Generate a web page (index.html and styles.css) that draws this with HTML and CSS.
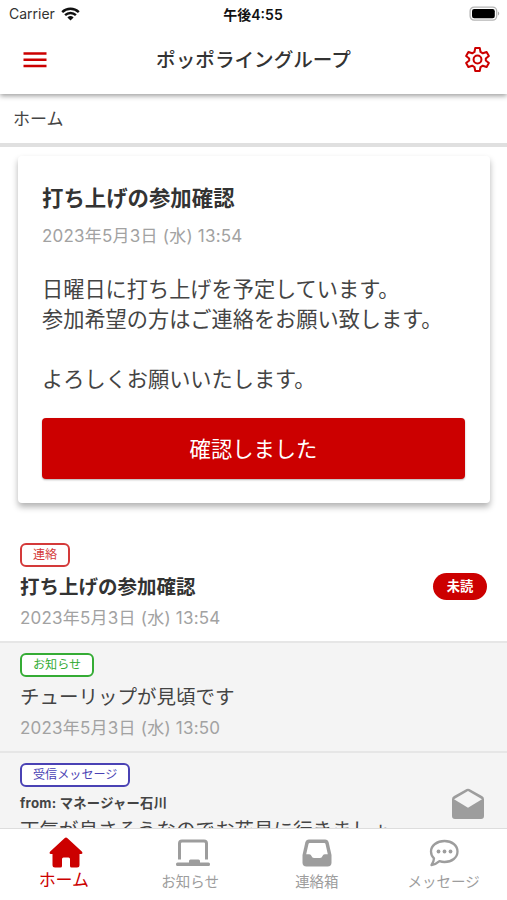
FILE: index.html
```html
<!DOCTYPE html>
<html lang="ja">
<head>
  <meta charset="UTF-8" />
  <meta name="viewport" content="width=device-width, initial-scale=1.0" />
  <title>ポッポライングループ</title>
  <link rel="stylesheet" href="styles.css">
</head>
<body>
  <header class="header">
    <div class="status-bar">
      <div class="carrier">
        <span>Carrier</span>
        <svg width="19" height="14" viewBox="0 0 19 14">
          <path d="M1.2 5.2a11.8 11.8 0 0 1 16.6 0M4.1 8.2a7.7 7.7 0 0 1 10.8 0" fill="none" stroke="#111" stroke-width="2.4"/>
          <path d="M6.4 10.5a4.5 4.5 0 0 1 6.2 0L9.5 13.6z" fill="#111"/>
        </svg>
      </div>
      <div class="clock">午後4:55</div>
      <div class="battery">
        <svg width="32" height="16" viewBox="0 0 32 16">
          <rect x="1.1" y="1.1" width="26.6" height="13" rx="4" fill="#fff" stroke="#b5b5b5" stroke-width="1.3"/>
          <rect x="3" y="3" width="22.8" height="9.3" rx="2.2" fill="#000"/>
          <path d="M29 5.6a2.3 2.3 0 0 1 0 4z" fill="#aaa"/>
        </svg>
      </div>
    </div>
    <div class="title-bar">
      <svg class="menu-icon" width="24" height="18" viewBox="0 0 24 18">
        <path d="M.5 2.5h23M.5 8.8h23M.5 15h23" stroke="#c00" stroke-width="2.4"/>
      </svg>
      <h1>ポッポライングループ</h1>
      <svg class="gear-icon" width="27" height="27" viewBox="0 0 24 24" fill="none" stroke="#c00" stroke-width="1.8" stroke-linejoin="round">
        <path d="M10 1.800h4l.7 3.500 2 1.200 3.400-1.200 2 3.500-2.700 2.300v1.800l2.700 2.300-2 3.500-3.400-1.200-2 1.200-.7 3.500h-4l-.7-3.500-2-1.200-3.400 1.200-2-3.500 2.700-2.300v-1.800L1.900 8.800l2-3.500 3.400 1.200 2-1.200z"/>
        <circle cx="12" cy="12" r="3.500"/>
      </svg>
    </div>
  </header>

  <div class="breadcrumb">ホーム</div>

  <main class="content">
    <section class="card">
      <h2>打ち上げの参加確認</h2>
      <div class="date">2023年5月3日 (水) 13:54</div>
      <p>日曜日に打ち上げを予定しています。<br>参加希望の方はご連絡をお願い致します。<br><br>よろしくお願いいたします。</p>
      <button class="confirm">確認しました</button>
    </section>

    <div class="list">
      <div class="item unread">
        <div class="item-body">
          <span class="tag red">連絡</span>
          <div class="item-title">打ち上げの参加確認</div>
          <div class="date">2023年5月3日 (水) 13:54</div>
        </div>
        <span class="pill">未読</span>
      </div>
      <div class="item">
        <div class="item-body">
          <span class="tag green">お知らせ</span>
          <div class="item-title">チューリップが見頃です</div>
          <div class="date">2023年5月3日 (水) 13:50</div>
        </div>
      </div>
      <div class="item">
        <div class="item-body">
          <span class="tag blue">受信メッセージ</span>
          <div class="from">from: マネージャー石川</div>
          <div class="item-title">天気が良さそうなのでお花見に行きましょ</div>
        </div>
        <svg class="mail-icon" width="34" height="32" viewBox="0 0 34 32">
          <path d="M3 8 15.600 1.100q1.400-.8 2.800 0L31 8q2 1.100 2 3.200V28q0 3-3 3H4q-3 0-3-3V11.200Q1 9.100 3 8z" fill="#9d9d9d"/>
          <path d="M17 3 31 11.300 17 19.800 3 11.300z" fill="#f4f4f4"/>
        </svg>
      </div>
    </div>
  </main>

  <nav class="tabs">
    <a class="tab active">
      <svg width="34" height="31" viewBox="0 0 34 31">
        <path d="M15.500 1.200q1.500-1.400 3 0L32.800 14.600q1.600 2-.8 2.400H30.500V28q0 2.500-2.500 2.500H22.500q-1.500 0-1.500-1.500V22q0-1.500-1.500-1.500h-5Q13 20.500 13 22v7q0 1.500-1.500 1.500H6Q3.500 30.500 3.500 28V17H2q-2.400-.4-.8-2.400z" fill="#c00"/>
      </svg>
      <span>ホーム</span>
    </a>
    <a class="tab notice">
      <svg width="34" height="28" viewBox="0 0 34 28">
        <path d="M3.500 20.500V4.500q0-2.500 2.500-2.500h22q2.500 0 2.500 2.500V20.500" fill="none" stroke="#9d9d9d" stroke-width="3"/>
        <path d="M1.500 23.500H13V22q0-1.500 1.500-1.500h8Q24 20.500 24 22v1.500h8.500Q34 23.500 34 25v.500q0 1.500-1.500 1.500h-31Q0 27 0 25.500V25q0-1.500 1.500-1.500z" fill="#9d9d9d"/>
      </svg>
      <span>お知らせ</span>
    </a>
    <a class="tab">
      <svg width="30" height="28" viewBox="0 0 30 28">
        <path d="M7 .5h16q3 0 3.700 3L29.500 16v7.500q0 4-4 4h-21q-4 0-4-4V16L3.300 3.500Q4 .5 7 .5z" fill="#9d9d9d"/>
        <path d="M7.700 4h14.600q1 0 1.200 1l2.300 10.300h-3q-1.800 0-2.300 1.700-.6 2-2.500 2h-6q-1.900 0-2.500-2-.5-1.700-2.300-1.700h-3L6.500 5q.2-1 1.200-1z" fill="#fff"/>
      </svg>
      <span>連絡箱</span>
    </a>
    <a class="tab">
      <svg width="30" height="28" viewBox="0 0 30 28">
        <path d="M15.500 2C23 2 28.500 6.500 28.500 12.500S23 23 15.500 23q-2.600 0-5-.8Q7 25.400 2.500 26q2.300-3 2.500-6.600Q2 16.500 2 12.500C2 6.500 8 2 15.500 2z" fill="none" stroke="#9d9d9d" stroke-width="2.300" stroke-linejoin="round"/>
        <g fill="#9d9d9d"><circle cx="9.500" cy="12.500" r="1.900"/><circle cx="15.500" cy="12.500" r="1.900"/><circle cx="21.500" cy="12.500" r="1.900"/></g>
      </svg>
      <span>メッセージ</span>
    </a>
  </nav>
</body>
</html>
```
FILE: styles.css
```css
* {
  box-sizing: border-box;
}
body {
  margin: 0;
  height: 900px;
  display: flex;
  flex-direction: column;
  overflow: hidden;
  background: #fff;
  color: #444;
  font-family: Inter, "Noto Sans CJK JP", sans-serif;
  white-space: nowrap;
}
h1, h2, p {
  margin: 0;
}
svg {
  display: block;
  flex: none;
}
.header {
  height: 94px;
  flex: none;
  box-shadow: 0 2px 5px rgba(0, 0, 0, 0.38);
}
.status-bar {
  display: grid;
  grid-template-columns: 1fr auto 1fr;
  align-items: center;
  height: 27px;
  padding: 0 8px 0 9px;
  font-size: 14px;
  color: #111;
}
.carrier {
  display: flex;
  align-items: center;
  gap: 6px;
  color: #333;
}
.clock {
  padding-right: 2px;
  font-size: 14px;
  font-weight: 600;
}
.battery {
  display: flex;
  justify-content: flex-end;
  margin-right: -2px;
}
.title-bar {
  display: flex;
  align-items: center;
  justify-content: space-between;
  height: 65px;
  padding: 0 16px 0 23px;
}
.title-bar h1 {
  margin: 0 2px 2px -2px;
  color: #333;
  font-size: 19.6px;
  font-weight: 500;
}
.breadcrumb {
  height: 53px;
  flex: none;
  padding-left: 13px;
  border-bottom: 4px solid #e0e0e0;
  font-size: 17px;
  line-height: 50px;
}
.content {
  flex: 1;
  min-height: 0;
  overflow: hidden;
}
.card {
  height: 347px;
  margin: 9px 17px 30px 18px;
  padding: 25px 25px 0 24px;
  border-radius: 4px;
  box-shadow: 0 4px 6px rgba(0, 0, 0, 0.3);
}
.card h2 {
  color: #333;
  font-size: 21.4px;
  line-height: 34px;
}
.date {
  color: #a2a2a2;
  font-size: 17px;
  letter-spacing: 0.22px;
  line-height: 26px;
}
.card .date {
  margin-top: 8px;
}
.card p {
  margin-top: 25px;
  font-size: 21.2px;
  line-height: 30px;
}
.confirm {
  display: block;
  width: 100%;
  height: 61px;
  margin-top: 24px;
  padding: 0 0 2px;
  border: none;
  border-radius: 4px;
  background: #c00;
  box-shadow: 0 1px 2px rgba(0, 0, 0, 0.3);
  color: #fff;
  font-family: inherit;
  font-size: 21.3px;
}
.item {
  display: flex;
  align-items: center;
  justify-content: space-between;
  height: 110px;
  padding: 0 20px;
  border-bottom: 2px solid #e6e6e6;
  background: #f4f4f4;
}
.item-body {
  height: 110px;
  padding-top: 11px;
}
.item.unread {
  background: #fff;
}
.tag {
  display: block;
  width: fit-content;
  height: 24px;
  padding: 0 11px;
  border: 2px solid;
  border-radius: 6px;
  background: #fff;
  font-size: 12.1px;
  line-height: 20px;
}
.red {
  color: #d43a3a;
}
.green {
  color: #35ac35;
}
.blue {
  color: #4a42b4;
}
.item-title {
  margin-top: 4px;
  font-size: 19.5px;
  line-height: 32px;
}
.unread .item-title {
  color: #333;
  font-weight: bold;
}
.item .date {
  margin-top: 2px;
}
.from {
  margin-top: 6px;
  font-size: 13.3px;
  font-weight: bold;
  letter-spacing: 0.25px;
  line-height: 20px;
}
.from + .item-title {
  margin-top: 1px;
}
.pill {
  width: 54px;
  height: 27px;
  border-radius: 14px;
  background: #c00;
  color: #fff;
  font-size: 13.3px;
  font-weight: bold;
  line-height: 27px;
  text-align: center;
}
.unread .pill {
  margin-bottom: 2px;
}
.mail-icon {
  margin: 0 2px 7px 0;
}
.tabs {
  display: grid;
  grid-template-columns: repeat(4, 1fr);
  height: 72px;
  flex: none;
  border-top: 1px solid #ddd;
  background: #fff;
}
.tab {
  display: flex;
  flex-direction: column;
  align-items: center;
  padding-top: 10px;
  color: #9d9d9d;
  font-size: 14.5px;
}
.tab span {
  margin-top: 3px;
  line-height: 24px;
}
.tab.active {
  padding-top: 8px;
  color: #c00;
  font-size: 17px;
}
.tab.active svg {
  margin-left: 5px;
}
.tab.active span {
  margin: 0 0 0 1px;
}
.tab.notice svg {
  margin-left: 5px;
}
```
